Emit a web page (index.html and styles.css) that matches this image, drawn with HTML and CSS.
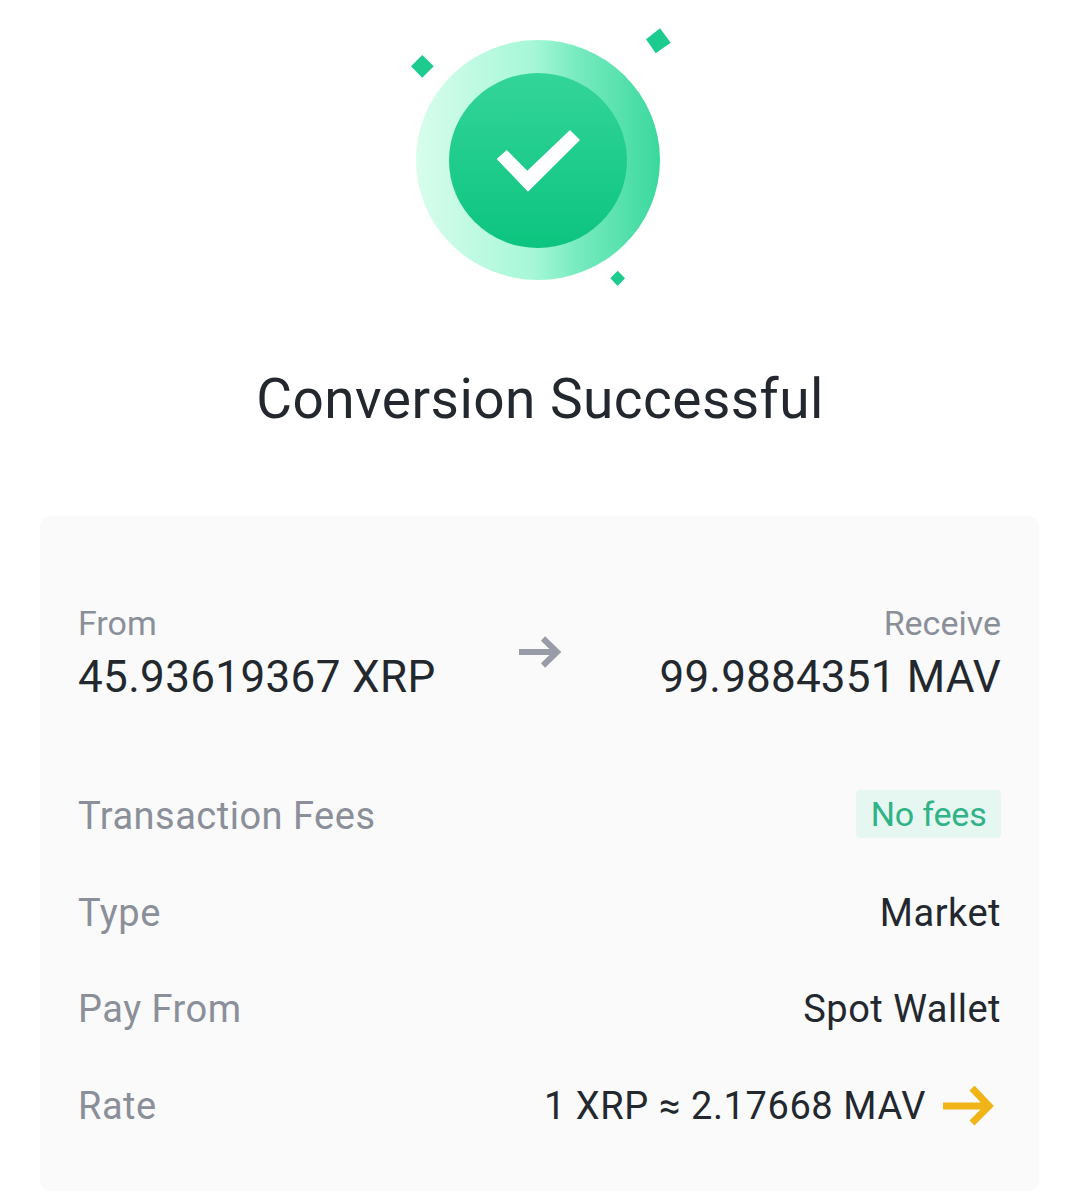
FILE: index.html
```html
<!DOCTYPE html>
<html lang="en">
<head>
<meta charset="utf-8">
<title>Conversion Successful</title>
<link rel="stylesheet" href="styles.css">
</head>
<body>
<main class="page">
  <svg class="hero" width="280" height="280" viewBox="0 0 280 280" aria-hidden="true">
    <defs>
      <linearGradient id="ring" x1="0" y1="0" x2="1" y2="0">
        <stop offset="0" stop-color="#d8fdec"/>
        <stop offset="0.48" stop-color="#a6f7d8"/>
        <stop offset="0.66" stop-color="#78ebc0"/>
        <stop offset="1" stop-color="#3ad89c"/>
      </linearGradient>
      <linearGradient id="core" x1="0" y1="0" x2="0" y2="1">
        <stop offset="0" stop-color="#33d598"/>
        <stop offset="1" stop-color="#0cc47f"/>
      </linearGradient>
    </defs>
    <ellipse cx="138" cy="150" rx="122" ry="120" fill="url(#ring)"/>
    <ellipse cx="138" cy="150.500" rx="89" ry="87.500" fill="url(#core)"/>
    <path d="M96.700 149 L106.700 140 L127.300 160.700 L170 120 L180 130 L128 181.700 Z" fill="#fff"/>
    <path d="M22.300 45 L33.700 56.300 L22.300 67.700 L11 56.300 Z" fill="#1ecb8f"/>
    <path d="M260 18.300 L270.700 32.700 L255.700 43.300 L246 29.300 Z" fill="#1ecb8f"/>
    <path d="M217.700 260.700 L225 268.300 L217.700 276 L210.300 268.300 Z" fill="#1ecb8f"/>
  </svg>
  <h1 class="title">Conversion Successful</h1>
  <section class="card">
    <div class="swap">
      <div class="side">
        <span class="label">From</span>
        <span class="amount">45.93619367 XRP</span>
      </div>
      <svg class="swap-arrow" width="44" height="34" viewBox="0 0 44 34" aria-hidden="true">
        <path d="M1 17 H39 M25 3.500 L39 17 L25 30.500" fill="none" stroke="#979ca6" stroke-width="6"/>
      </svg>
      <div class="side side-end">
        <span class="label">Receive</span>
        <span class="amount amount-end">99.9884351 MAV</span>
      </div>
    </div>
    <div class="rows">
      <div class="row">
        <span class="key">Transaction Fees</span>
        <span class="badge">No fees</span>
      </div>
      <div class="row">
        <span class="key">Type</span>
        <span class="val">Market</span>
      </div>
      <div class="row">
        <span class="key">Pay From</span>
        <span class="val">Spot Wallet</span>
      </div>
      <div class="row">
        <span class="key">Rate</span>
        <span class="val rate">1 XRP ≈ 2.17668 MAV
          <svg class="rate-arrow" width="52" height="40" viewBox="0 0 52 40" aria-hidden="true">
            <path d="M1 20 H46 M30 2 L47 20 L30 37" fill="none" stroke="#f0b417" stroke-width="7"/>
          </svg>
        </span>
      </div>
    </div>
  </section>
</main>
</body>
</html>
```
FILE: styles.css
```css
* { box-sizing: border-box; }
html, body { margin: 0; padding: 0; background: #fff; }
body { font-family: Roboto, "Liberation Sans", sans-serif; color: #23282e; }
.page { width: 1080px; height: 1200px; overflow: hidden; display: flex; flex-direction: column; align-items: center; padding-top: 10px; }
.hero { display: block; flex: none; }
.title { margin: 75px 0 0; height: 68px; font-size: 55px; line-height: 68px; font-weight: 400; letter-spacing: 0.45px; color: #23282e; }
.card { width: 999px; margin: 83px 0 0 -1px; height: 675px; background: #fafafb; border-radius: 10px; padding: 88px 38px 0; }
.swap { display: flex; justify-content: space-between; align-items: flex-start; }
.side { display: flex; flex-direction: column; width: 360px; }
.side-end { align-items: flex-end; }
.label { font-size: 34px; line-height: 38px; color: #8a8f99; }
.amount { margin-top: 9px; font-size: 44px; line-height: 52px; letter-spacing: 0.35px; white-space: nowrap; }
.amount-end { letter-spacing: 0.2px; }
.swap-arrow { flex: none; margin-top: 31px; }
.rows { margin-top: 88px; display: flex; flex-direction: column; }
.row { display: flex; justify-content: space-between; align-items: center; height: 50px; margin-bottom: 46.500px; }
.key { font-size: 38px; line-height: 50px; color: #8a8f99; letter-spacing: 0.5px; }
.val { font-size: 38px; line-height: 50px; letter-spacing: 0.5px; }
.badge { font-size: 34px; line-height: 48px; padding: 0 14.500px; margin-bottom: 4px; letter-spacing: -0.2px; background: #e6f6f0; color: #2fb387; border-radius: 4px; }
.rate { display: flex; align-items: center; gap: 16px; letter-spacing: 0.6px; }
.rate-arrow { flex: none; margin-right: 7px; }
```
